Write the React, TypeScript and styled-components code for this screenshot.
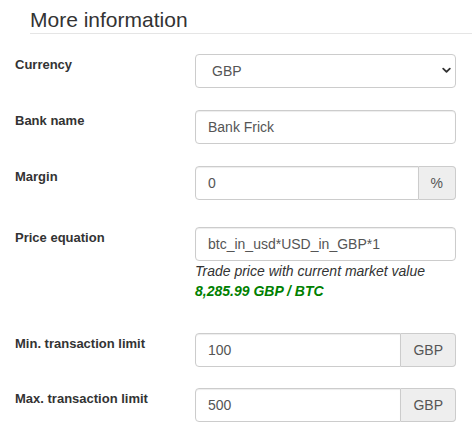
import React from 'react';
import styled, { createGlobalStyle } from 'styled-components';

const GlobalStyle = createGlobalStyle`
  html, body {
    margin: 0;
    padding: 0;
    background: #fff;
  }
  body {
    font-family: 'Liberation Sans', Arial, Helvetica, sans-serif;
    color: #333;
  }
  * {
    box-sizing: border-box;
  }
`;

const Page = styled.div`
  width: 472px;
  padding-top: 8px;
`;

const Legend = styled.div`
  margin-left: 30px;
  padding-bottom: 2px;
  border-bottom: 1px solid #e5e5e5;
  font-size: 21px;
  line-height: 23px;
  font-weight: 400;
  color: #333;
`;

const Form = styled.div`
  display: flex;
  flex-direction: column;
  padding: 20px 16px 0 15px;
`;

const Row = styled.div<{ $gap?: number }>`
  display: flex;
  align-items: flex-start;
  margin-top: ${({ $gap }) => $gap ?? 0}px;
  margin-bottom: 22px;
`;

const Label = styled.label`
  width: 180px;
  flex: none;
  padding-top: 2px;
  font-size: 13px;
  line-height: 18px;
  font-weight: 700;
  color: #333;
`;

const Control = styled.div`
  flex: 1;
  min-width: 0;
  display: flex;
  flex-direction: column;
`;

const InputGroup = styled.div`
  display: flex;
  width: 100%;
`;

const Field = styled.input<{ $addon?: boolean }>`
  flex: none;
  width: 100%;
  height: 34px;
  padding: 6px 12px;
  font-family: inherit;
  font-size: 14px;
  line-height: 20px;
  color: #555;
  background: #fff;
  border: 1px solid #ccc;
  border-radius: ${({ $addon }) => ($addon ? '4px 0 0 4px' : '4px')};
  box-shadow: inset 0 1px 1px rgba(0, 0, 0, 0.075);
  outline: none;

  ${InputGroup} & {
    flex: 1;
    width: auto;
    min-width: 0;
  }
`;

const Addon = styled.span`
  flex: none;
  height: 34px;
  padding: 6px 12px;
  font-size: 14px;
  line-height: 20px;
  color: #555;
  background: #eee;
  border: 1px solid #ccc;
  border-left: none;
  border-radius: 0 4px 4px 0;
`;

const SelectWrap = styled.div`
  position: relative;
  width: 100%;
  height: 34px;
`;

const Select = styled.select`
  appearance: none;
  display: block;
  width: 100%;
  height: 34px;
  padding: 6px 12px 6px 16px;
  font-family: inherit;
  font-size: 14px;
  line-height: 20px;
  color: #555;
  background: #fff;
  border: 1px solid #ccc;
  border-radius: 4px;
  outline: none;
`;

const Chevron = styled.svg`
  position: absolute;
  right: 5px;
  top: 13px;
  width: 9px;
  height: 7px;
  pointer-events: none;
`;

const Help = styled.div`
  margin-bottom: 10px;
  font-size: 14px;
  line-height: 20px;
  font-style: italic;
  color: #333;
`;

const Price = styled.div`
  font-weight: 700;
  color: #008000;
`;

export default function App() {
  return (
    <Page>
      <GlobalStyle />
      <Legend>More information</Legend>
      <Form>
        <Row>
          <Label>Currency</Label>
          <Control>
            <SelectWrap>
              <Select defaultValue="GBP">
                <option value="GBP">GBP</option>
                <option value="USD">USD</option>
                <option value="EUR">EUR</option>
              </Select>
              <Chevron viewBox="0 0 9 7">
                <path d="M1.2 1.6 L4.5 4.9 L7.8 1.6" fill="none" stroke="#333" strokeWidth="1.8" strokeLinecap="round" strokeLinejoin="round" />
              </Chevron>
            </SelectWrap>
          </Control>
        </Row>
        <Row>
          <Label>Bank name</Label>
          <Control>
            <Field defaultValue="Bank Frick" />
          </Control>
        </Row>
        <Row>
          <Label>Margin</Label>
          <Control>
            <InputGroup>
              <Field $addon defaultValue="0" />
              <Addon>%</Addon>
            </InputGroup>
          </Control>
        </Row>
        <Row $gap={5}>
          <Label>Price equation</Label>
          <Control>
            <Field defaultValue="btc_in_usd*USD_in_GBP*1" />
            <Help>
              Trade price with current market value
              <Price>8,285.99 GBP / BTC</Price>
            </Help>
          </Control>
        </Row>
        <Row>
          <Label>Min. transaction limit</Label>
          <Control>
            <InputGroup>
              <Field $addon defaultValue="100" />
              <Addon>GBP</Addon>
            </InputGroup>
          </Control>
        </Row>
        <Row $gap={-1}>
          <Label>Max. transaction limit</Label>
          <Control>
            <InputGroup>
              <Field $addon defaultValue="500" />
              <Addon>GBP</Addon>
            </InputGroup>
          </Control>
        </Row>
      </Form>
    </Page>
  );
}
